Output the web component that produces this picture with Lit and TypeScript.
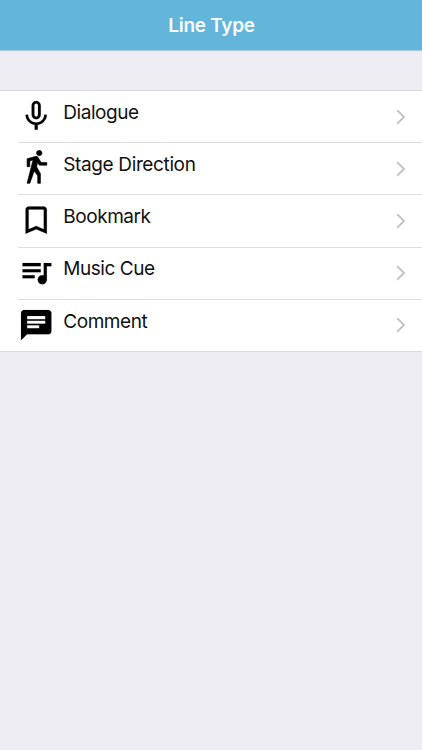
import { LitElement, html, css, svg } from "lit";
import { customElement } from "lit/decorators.js";

interface LineType {
  label: string;
  cls: string;
  path: string;
}

const LINE_TYPES: LineType[] = [
  {
    label: "Dialogue",
    cls: "dialogue",
    path: "M12 14c1.66 0 2.99-1.34 2.99-3L15 5c0-1.66-1.34-3-3-3S9 3.34 9 5v6c0 1.66 1.34 3 3 3zm-1.2-9.1c0-.66.54-1.2 1.2-1.2.66 0 1.2.54 1.2 1.2l-.01 6.2c0 .66-.53 1.2-1.19 1.2-.66 0-1.2-.54-1.2-1.2V4.9zm6.5 6.1c0 3-2.54 5.1-5.3 5.1S6.7 14 6.7 11H5c0 3.41 2.72 6.23 6 6.72V21h2v-3.28c3.28-.48 6-3.3 6-6.72h-1.7z",
  },
  {
    label: "Stage Direction",
    cls: "stage",
    path: "M14 3.8c1 0 1.8-.8 1.8-1.8S15 .2 14 .2s-1.8.8-1.8 1.8.8 1.8 1.8 1.8zm.1 6.2H19V8.2h-3.8l-1.9-3.2c-.3-.5-.8-.8-1.4-.8-.2 0-.3 0-.5.1L6 5.8V11h1.8V7.3l2.1-.7L6 22h1.8l2.9-8.1L13 17v5h1.8v-6.4l-2.5-4.5.7-2.9z",
  },
  {
    label: "Bookmark",
    cls: "bookmark",
    path: "M17 3H7c-1.1 0-1.99.9-1.99 2L5 21l7-3 7 3V5c0-1.1-.9-2-2-2zm0 15l-5-2.18L7 18V5h10v13z",
  },
  {
    label: "Music Cue",
    cls: "music",
    path: "M15 6H3v2h12V6zm0 4H3v2h12v-2zM3 16h8v-2H3v2zM17 6v8.18c-.31-.11-.65-.18-1-.18-1.66 0-3 1.34-3 3s1.34 3 3 3 3-1.34 3-3V8h3V6h-5z",
  },
  {
    label: "Comment",
    cls: "comment",
    path: "M20 2H4c-1.1 0-1.99.9-1.99 2L2 22l4-4h14c1.1 0 2-.9 2-2V4c0-1.1-.9-2-2-2zM6 9h12v2H6V9zm8 5H6v-2h8v2zm4-6H6V6h12v2z",
  },
];

@customElement("app-root")
export class AppRoot extends LitElement {
  static styles = css`
    :host {
      display: block;
      min-height: 750px;
      background: #eeedf4;
      font-family: Inter, "Liberation Sans", sans-serif;
      color: #111;
    }
    .bar {
      box-sizing: border-box;
      height: 51px;
      display: flex;
      align-items: center;
      justify-content: center;
      background: #63b5da;
      border-bottom: 1px solid #a9c8da;
      color: #f7fcff;
    }
    .title {
      margin: 0;
      padding: 1px 0 0 1px;
      font-size: 19px;
      font-weight: 600;
      line-height: 24px;
      letter-spacing: -0.3px;
    }
    .list {
      margin: 39px 0 0;
      padding: 0;
      list-style: none;
      background: #fff;
      border-top: 1px solid #d9d8dd;
      border-bottom: 1px solid #d9d8dd;
    }
    .row {
      box-sizing: border-box;
      height: 52.2px;
      margin-left: 18px;
      display: flex;
      align-items: flex-start;
      border-bottom: 1px solid #dedee0;
    }
    .row:last-child {
      height: 51.2px;
      border-bottom: 0;
    }
    .icon {
      flex: none;
      width: 36.4px;
      height: 36.4px;
      margin-top: 6.9px;
      fill: #000;
      stroke: #000;
      stroke-width: 0.1;
    }
    .stage .icon {
      stroke-width: 0.4;
    }
    .label {
      flex: 1;
      margin-left: 8.9px;
      padding-top: 9.9px;
      font-size: 19px;
      line-height: 24px;
      letter-spacing: -0.45px;
    }
    .stage .label {
      letter-spacing: -0.37px;
    }
    .chevron {
      flex: none;
      width: 10px;
      height: 16px;
      margin: 17.7px 16px 0 0;
      fill: none;
      stroke: #c5c5c9;
      stroke-width: 2;
    }
  `;

  render() {
    return html`
      <header class="bar"><h1 class="title">Line Type</h1></header>
      <ul class="list">
        ${LINE_TYPES.map(
          (t) => html`
            <li class="row ${t.cls}">
              <svg class="icon" viewBox="0 0 24 24">${svg`<path d=${t.path}></path>`}</svg>
              <span class="label">${t.label}</span>
              <svg class="chevron" viewBox="0 0 10 16"><path d="M1.2 1.2 8 8l-6.8 6.8"></path></svg>
            </li>
          `
        )}
      </ul>
    `;
  }
}
